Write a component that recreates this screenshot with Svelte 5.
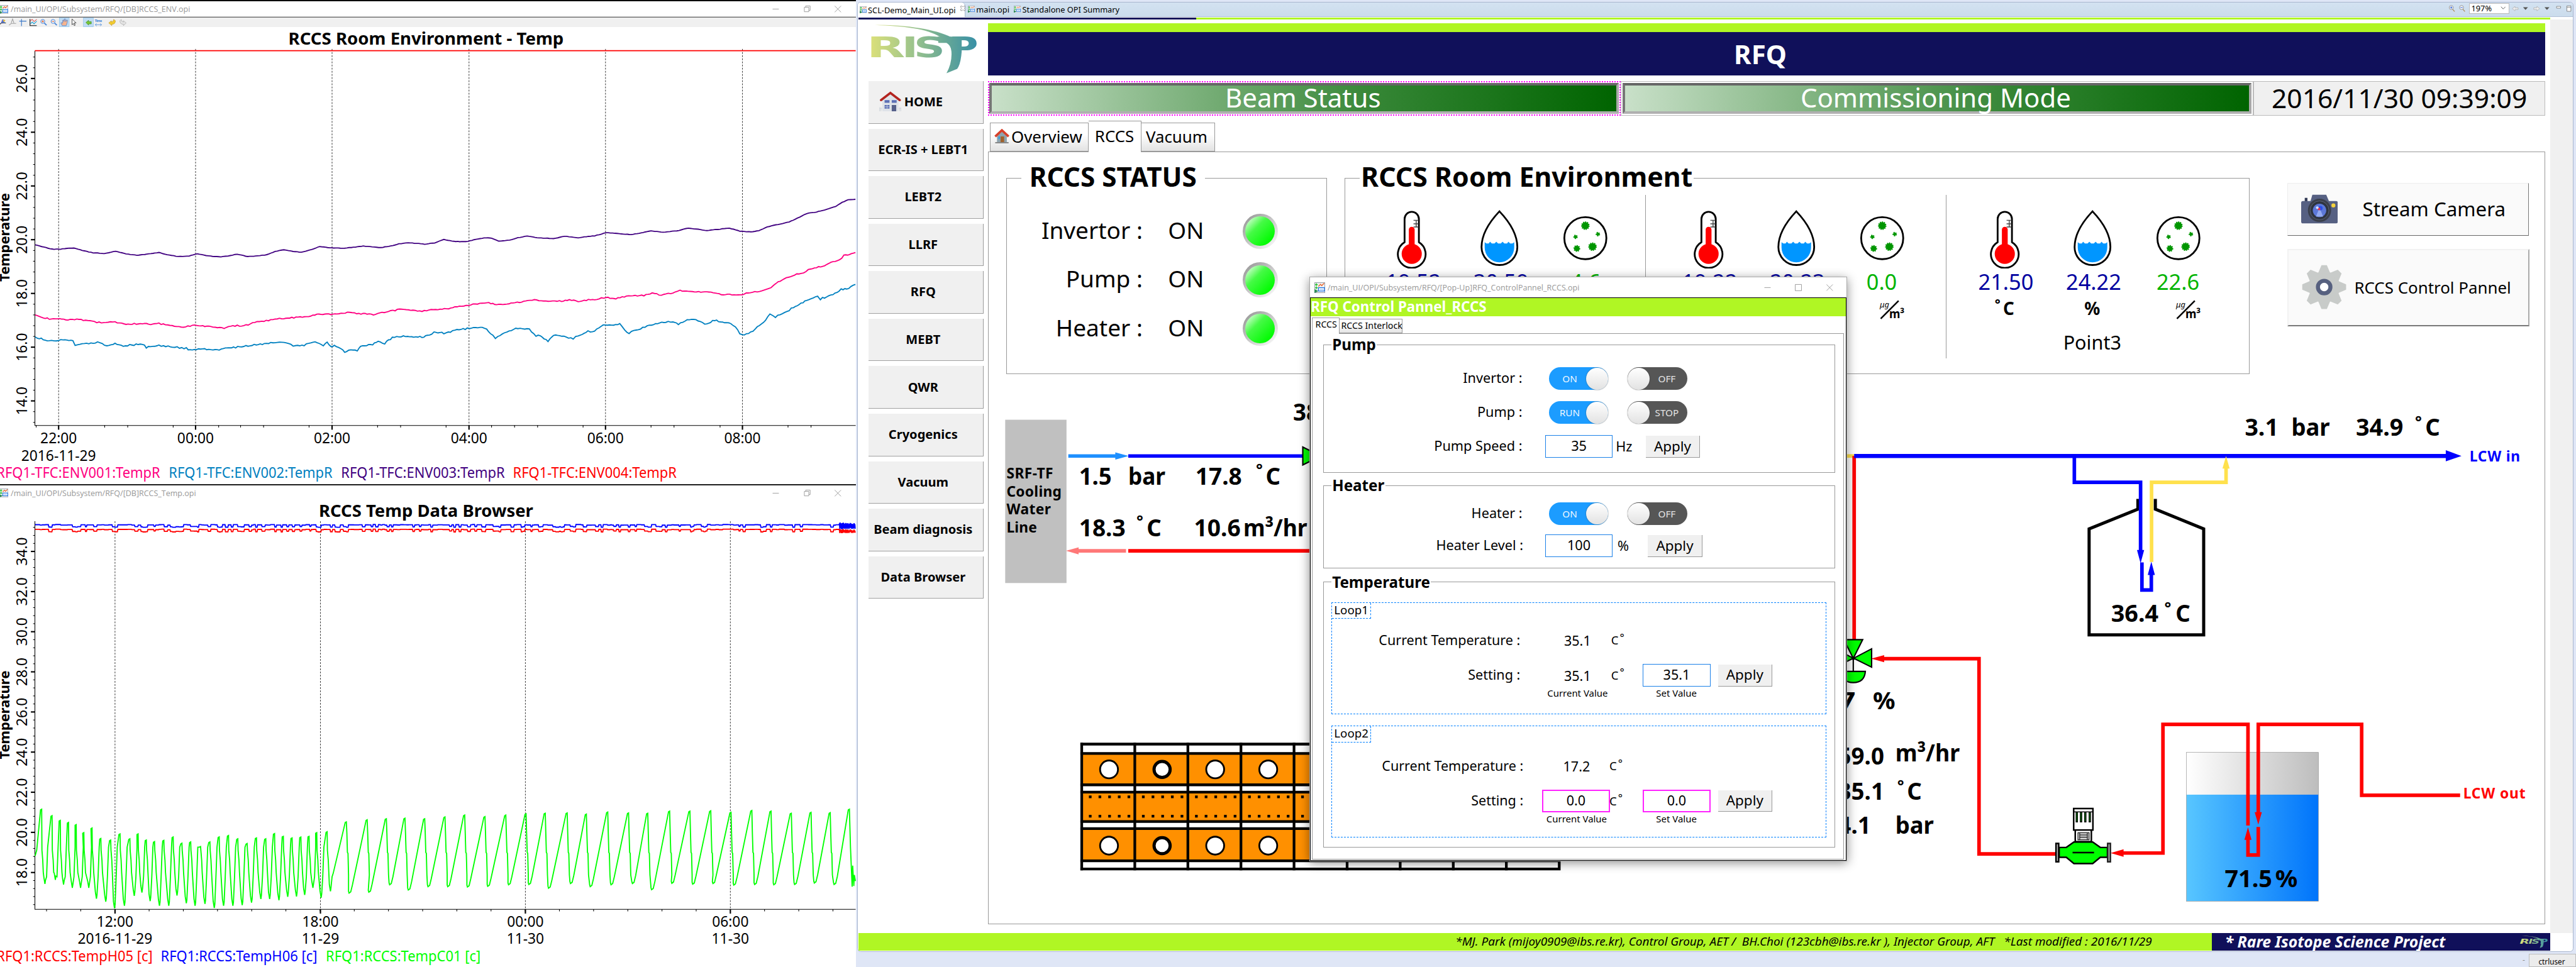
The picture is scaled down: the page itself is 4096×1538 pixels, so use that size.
<script>
  // Deterministic noise so that the traces look the same on every load
  function noise(seed) {
    let s = seed;
    return () => {
      s = (s * 1103515245 + 12345) % 2147483648;
      return s / 2147483648;
    };
  }

  const pts = (list) => list.map(([x, y]) => x.toFixed(1) + ',' + y.toFixed(1)).join(' ');

  // Room environment traces: sparse samples, densified with a little jitter
  const EX = 1.2245, EY = 0.692;
  function trace(flat, jitter, seed) {
    const r = noise(seed);
    const out = [];
    for (let i = 0; i + 3 < flat.length; i += 2) {
      const [x1, y1, x2, y2] = flat.slice(i, i + 4);
      const n = Math.max(1, Math.round((x2 - x1) / 4));
      for (let k = 0; k < n; k++) {
        const u = k / n;
        out.push([(x1 + (x2 - x1) * u) * EX, (y1 + (y2 - y1) * u + (r() - 0.5) * jitter) * EY]);
      }
    }
    out.push([flat[flat.length - 2] * EX, flat[flat.length - 1] * EY]);
    return pts(out);
  }

  const env003 = trace([64,793,80,800,95,807,110,807,135,803,150,811,170,819,190,821,211,814,230,822,250,827,268,823,290,818,305,825,325,831,345,829,360,822,380,829,403,832,420,828,433,823,452,831,470,829,487,825,502,814,518,809,535,814,550,817,565,810,583,799,605,803,625,804,645,801,663,797,695,802,713,797,728,790,745,786,775,791,793,787,810,776,828,782,850,783,865,777,887,770,897,772,910,781,930,778,945,770,962,765,980,770,1010,773,1030,765,1055,770,1085,764,1106,754,1130,757,1152,760,1170,755,1188,748,1210,752,1235,748,1256,739,1270,742,1290,747,1310,743,1331,739,1350,749,1370,751,1385,747,1400,735,1420,727,1440,719,1455,707,1472,692,1490,687,1508,679,1525,669,1537,656,1548,647,1561,646], 1.2, 7);
  const env001 = trace([64,1018,75,1027,90,1032,105,1031,120,1035,140,1033,160,1038,185,1045,210,1042,230,1049,260,1047,275,1050,290,1047,310,1054,335,1058,355,1054,385,1058,409,1062,425,1054,445,1055,465,1043,490,1037,510,1031,540,1028,567,1023,582,1015,600,1018,630,1012,655,1015,685,1018,705,1009,733,1001,770,1007,795,1002,815,1000,830,994,855,987,892,981,910,987,940,980,975,971,1000,975,1025,975,1035,971,1055,975,1085,969,1106,963,1120,968,1143,959,1175,957,1190,950,1207,955,1228,949,1241,940,1260,945,1290,946,1320,954,1355,955,1365,948,1390,942,1407,930,1420,914,1435,899,1450,889,1462,887,1475,873,1490,866,1505,860,1520,848,1532,841,1540,828,1550,825,1561,818], 4, 21);
  const env002 = trace([64,1088,68,1093,90,1103,115,1100,133,1102,137,1119,150,1113,178,1109,195,1118,210,1112,225,1119,260,1113,267,1124,290,1118,315,1123,340,1127,347,1134,362,1129,400,1131,430,1124,460,1117,490,1112,510,1106,535,1118,555,1117,575,1107,590,1117,597,1109,604,1122,610,1118,622,1128,629,1139,640,1132,652,1134,658,1119,680,1114,690,1105,702,1111,716,1092,740,1088,770,1091,780,1087,792,1076,810,1078,830,1070,868,1059,888,1063,895,1080,904,1094,925,1074,945,1062,966,1066,978,1086,986,1087,1000,1104,1010,1086,1025,1089,1046,1096,1055,1086,1073,1072,1085,1073,1097,1055,1131,1048,1140,1069,1148,1078,1165,1065,1185,1053,1215,1042,1228,1040,1238,1050,1250,1038,1270,1035,1286,1049,1304,1037,1322,1044,1334,1048,1342,1058,1350,1080,1358,1082,1370,1076,1382,1057,1397,1036,1405,1019,1415,1026,1432,1013,1448,995,1462,981,1472,972,1492,961,1497,968,1520,953,1535,937,1545,936,1561,921], 5, 33);

  const envMajor = [131, 437, 742, 1048, 1353, 1659];
  const envMinor = [66,191,233,316,399,439,481,564,689,731,814,897,939,981,1064,1188,1230,1314,1438,1480].map((c) => c * EX);
  const envTimes = ['22:00', '00:00', '02:00', '04:00', '06:00', '08:00'];
  const envTicks = [26, 24, 22, 20, 18, 16, 14].map((v) => ({ v: v.toFixed(1), y: 177 + (26 - v) * 60.05 }));
  const envSub = Array.from({ length: 36 }, (_, i) => 129 + i * 24.02).filter((y) => y < 950);

  // Loop temperatures
  const TX = 1.2245;
  const ty = (c) => 1080 + c * 0.6894;
  const peakX = [75,94,109,124,138,152,167,183,201,218,236,251,266,281,298,315,331,347,365,382,399,416,433,450,467,484,500,516,532,548,563,577,596,631,669,704,738,774,811,847,884,922,959,994,1034,1069,1108,1146,1181,1221,1258,1296,1333,1371,1406,1443,1479,1514,1549];
  const peakY = [1057,1078,1093,1100,1107,1133,1118,1152,1157,1137,1153,1137,1157,1162,1158,1147,1167,1163,1178,1163,1147,1142,1153,1168,1150,1153,1136,1145,1150,1147,1145,1133,1130,1098,1091,1088,1086,1088,1082,1076,1081,1076,1072,1070,1069,1073,1066,1069,1070,1063,1063,1062,1067,1061,1063,1070,1067,1068,1057];
  const lowX = [82,101,116,132,147,162,176,193,209,227,245,259,274,291,308,323,340,356,374,391,408,425,442,459,476,492,509,525,541,556,571,586,603,637,673,711,745,781,817,853,890,928,965,1001,1041,1077,1115,1154,1189,1226,1264,1301,1339,1377,1412,1450,1486,1522,1556];
  const lowY = [1299,1286,1301,1312,1312,1312,1347,1357,1378,1370,1338,1327,1355,1370,1370,1337,1362,1370,1364,1377,1370,1370,1368,1360,1348,1348,1352,1341,1340,1335,1312,1344,1323,1329,1326,1302,1319,1308,1308,1309,1307,1302,1301,1313,1298,1308,1302,1298,1318,1297,1300,1298,1303,1301,1302,1301,1296,1301,1308];
  const coolant = (() => {
    const out = [[64, 1208], [67, 1190]];
    peakX.forEach((px, i) => {
      const late = i > 32;
      out.push([px - 1, peakY[i] + 2], [px + 1, peakY[i]]);
      if (i === peakX.length - 1) return;
      const lx = lowX[i];
      const ly = lowY[i];
      if (late) {
        out.push([px + 2, 1135], [px + 3, 1197], [px + 4, 1200], [px + 5, 1270], [lx - 1, ly - 6], [lx, ly], [lx + 3, ly - 4], [lx + 6, ly - 26]);
      } else {
        out.push([px + 1.5, 1190], [px + 3, 1222], [px + 4, 1262], [lx - 2, ly - 22], [lx, ly], [lx + 1, ly - 12], [lx + 3, 1276], [lx + 5, i === 32 ? 1265 : 1180]);
      }
    });
    out.push([1552, 1180], [1555, 1308], [1556, 1240], [1558, 1306], [1559, 1270], [1561, 1290]);
    return pts(out.map(([x, y]) => [x * TX, ty(y)]));
  })();

  function steady(top, dip, spikeTop, spikeLow, seed) {
    const r = noise(seed);
    const out = [];
    let x = 64;
    while (x < 1526) {
      const low = r() > 0.62;
      const y = low ? dip - r() * 3 : top + r() * 2;
      out.push([x, y]);
      x += low ? 1.5 + r() * 4 : 2 + r() * 7;
      out.push([x, y]);
      x += 1;
    }
    while (x < 1561) {
      out.push([x, spikeTop + r() * 5], [x + 0.6, spikeLow - r() * 4]);
      x += 1.4;
    }
    return pts(out.map(([a, b]) => [a * TX, ty(b)]));
  }
  const tempH06 = steady(134, 143, 128, 149, 5);
  const tempH05 = steady(149, 158, 149, 162, 5);
  const loopMajor = [257, 716, 1174, 1632];
  const loopMinor = Array.from({ length: 24 }, (_, i) => 104 + i * 76.4).filter((x) => x < 1900);
  const loopTimes = [['12:00', '2016-11-29'], ['18:00', '11-29'], ['00:00', '11-30'], ['06:00', '11-30']];
  const loopTicks = [34, 32, 30, 28, 26, 24, 22, 20, 18].map((v) => ({ v: v.toFixed(1), y: 1232.5 + (34 - v) * 44.85 }));
  const loopSub = Array.from({ length: 48 }, (_, i) => 1178.7 + i * 17.94).filter((y) => y < 2030);

  const nav = ['HOME', 'ECR-IS + LEBT1', 'LEBT2', 'LLRF', 'RFQ', 'MEBT', 'QWR', 'Cryogenics', 'Vacuum', 'Beam diagnosis', 'Data Browser'];
  const status = ['Invertor :', 'Pump :', 'Heater :'];
  const points = [
    { name: 'Point1', t: '19.52', h: '30.59', d: '4.6' },
    { name: 'Point2', t: '19.22', h: '20.23', d: '0.0' },
    { name: 'Point3', t: '21.50', h: '24.22', d: '22.6' }
  ];

  // Readings on the process diagram: x, baseline, text, width
  const readings = [
    [2410, 1084, '1.5', 73], [2520, 1084, 'bar', 83], [2670, 1084, '17.8', 104], [2827, 1084, 'C', 33],
    [2410, 1199, '18.3', 104], [2561, 1199, 'C', 33], [2667, 1199, '10.6', 104], [2777, 1199, 'm³/hr', 143],
    [2888, 940, '38.1', 103],
    [5015, 974, '3.1', 75], [5119, 974, 'bar', 86], [5263, 974, '34.9', 106], [5418, 974, 'C', 33],
    [4716, 1390, '36.4', 106], [4860, 1390, 'C', 33],
    [4070, 1585, '47', 75], [4184, 1585, '%', 50],
    [4106, 1709, '59.0', 103], [4234, 1701, 'm³/hr', 144],
    [4106, 1788, '35.1', 103], [4260, 1788, 'C', 33],
    [4106, 1863, '4.1', 73], [4234, 1863, 'bar', 86],
    [4970, 1983, '71.5', 106], [5083, 1983, '%', 50]
  ];
  const rings = [[2813, 1042], [2546, 1158], [5403, 936], [4843, 1352], [4246, 1749]];

  const cols = Array.from({ length: 9 }, (_, i) => 2416 + i * 118.6);
</script>

{#snippet opi(size)}
  <svg width={size} height={size} viewBox="0 0 16 16">
    <rect x="0.5" y="0.5" width="15" height="15" fill="#f4f4f4" stroke="#9aa0ac" />
    <path d="M3 1.5v4M1 3.5h4M3 6v4M1 8h4" stroke="#22c02c" stroke-width="1.2" />
    <path d="M6 6l3-3 2 2 3.5-3.5" stroke="#e8622a" stroke-width="1.3" fill="none" />
    <rect x="6" y="8" width="9" height="5" fill="#fff" stroke="#1a6fe0" stroke-width="1.2" />
    <path d="M8 10.5h5" stroke="#1a6fe0" stroke-dasharray="1 1" />
    <path d="M0 10l6 3-6 3z" fill="#2e8b57" />
  </svg>
{/snippet}

{#snippet controls(mid)}
  <svg class="controls" width="160" height="18" viewBox="0 0 160 18">
    <g stroke="#999" stroke-width="1.3" fill="none">
      <path d="M2 9h14" />
      {#if mid === 'restore'}
        <path d="M73 5h10v10h-10zM76 5v-3h10v10h-3" />
      {:else}
        <path d="M71 2h14v14h-14z" />
      {/if}
      <path d="M141 2l14 14M155 2l-14 14" />
    </g>
  </svg>
{/snippet}

{#snippet logo(w, h)}
  <svg class="logo" width={w} height={h} viewBox="0 0 238 110">
    <defs>
      <linearGradient id="risp" x1="0" x2="238" y1="0" y2="0" gradientUnits="userSpaceOnUse">
        <stop offset="0" stop-color="#dbe07a" />
        <stop offset="0.4" stop-color="#9cc48c" />
        <stop offset="0.7" stop-color="#68a896" />
        <stop offset="1" stop-color="#3890a6" />
      </linearGradient>
    </defs>
    <g fill="url(#risp)">
      <path d="M10 1C75 0 145 10 180 28L158 29C125 8 75 4 10 1z" />
      <path d="M150 27H204V60Q202 88 194 99L170 109Q183 85 181 60Q180 46 170 41H152z" />
      <text class="mark" x="-8" y="73" textLength="86" lengthAdjust="spacingAndGlyphs">R</text>
      <text class="mark" x="70" y="73" textLength="37" lengthAdjust="spacingAndGlyphs">I</text>
      <text class="mark" x="97" y="73" textLength="70" lengthAdjust="spacingAndGlyphs">S</text>
      <text class="mark" x="175" y="73" textLength="66" lengthAdjust="spacingAndGlyphs">P</text>
    </g>
  </svg>
{/snippet}

{#snippet house(w, h)}
  <svg width={w} height={h} viewBox="0 0 48 46">
    <path d="M6 20L24 5l18 15v25H6z" fill="#dfe3e8" />
    <path d="M0 36v9M3 36v9M45 36v9M48 36v9M0 39h5M43 39h5" stroke="#cfd5db" stroke-width="1.5" />
    <path d="M3 20L24 4l21 16" fill="none" stroke="#b3241f" stroke-width="5" stroke-linecap="round" />
    <path d="M11 20h11v6H11zM27 20h11v6H27zM11 31h11v8H11z" fill="#5b6fb5" />
    <path d="M27 31h10v14H27z" fill="#56608a" />
    <path d="M16.5 31v8M11 35h11" stroke="#dfe3e8" />
  </svg>
{/snippet}

{#snippet toggle(label, on)}
  <span class="toggle" class:on><i></i><b>{label}</b></span>
{/snippet}

<div class="screen">
  <section class="charts">
    <div class="win first">
      <div class="titlebar">
        {@render opi(20)}<span>/main_UI/OPI/Subsystem/RFQ/[DB]RCCS_ENV.opi</span>
        {@render controls('restore')}
      </div>
      <div class="toolbar">
        <svg width="300" height="22" viewBox="0 40 300 22">
          <rect x="132.500" y="40.500" width="22" height="20" fill="#c0dcf3" stroke="#90c4ee" />
          <rect x="186.500" y="40.500" width="22" height="20" fill="#c0dcf3" stroke="#90c4ee" />
          <path d="M-2 56l5-4h10" stroke="#222" fill="none" stroke-width="1.500" />
          <text x="2" y="52" font-size="12" font-weight="700" fill="#1a50d0">A</text>
          <path d="M9 44l3 3-3 3-3-3z" fill="#e8b83a" />
          <path d="M20 57l5-4h11M25 52l3-9 3 9" stroke="#a0a0a0" fill="none" stroke-width="1.500" />
          <path d="M43 48h16M48 43v16" stroke="#3b78c8" stroke-width="1.600" />
          <path d="M67 43v15h15" stroke="#111" fill="none" stroke-width="1.600" />
          <path d="M68 47l4-3 4 5 6-5" stroke="#d02020" fill="none" stroke-width="1.300" />
          <path d="M68 54l4-4 4 4 6-6" stroke="#18a0d8" fill="none" stroke-width="1.500" />
          <g fill="#eef5ff" stroke="#4a86d8" stroke-width="1.400">
            <path d="M99 52l5 5M122 52l5 5" stroke-width="2.600" />
            <circle cx="95.500" cy="48.500" r="4.500" /><circle cx="118.500" cy="48.500" r="4.500" />
          </g>
          <path d="M93 48.500h5M95.500 46v5M116 48.500h5" stroke="#e05010" stroke-width="1.400" />
          <path d="M139 58l-3-6 2-1 2 2v-7l2-1 1 4 1-6 2 0 1 6 2-4 2 1-1 6-2 6z" fill="#f8b48c" stroke="#3a78d0" />
          <path d="M161 43v13l3-3 2 5 2-1-2-5h4z" fill="#fff" stroke="#111" />
          <path d="M192 51l6-5v3h6v5h-6v3z" fill="#7cc832" stroke="#3b8a2a" />
          <text x="212" y="50" font-size="7.500" font-weight="700" fill="#3a82d8" textLength="16">Time</text>
          <path d="M213 56h14M216 53l-3 3 3 3M224 53l3 3-3 3" stroke="#3a82d8" fill="none" />
          <path d="M243 52l6-5v3q5-1 5-6l4 3q0 8-8 8v3z" fill="#f2cc30" stroke="#b88a18" stroke-width="0.800" />
          <path d="M282 52l-6-5v3q-5-1-5-6l-3 3q0 8 8 8v3z" fill="#e4e4e4" stroke="#999" stroke-width="0.800" />
        </svg>
      </div>
      <svg class="plot" width="1912" height="1020" viewBox="0 62 1912 1020">
        <text class="title" x="952" y="101" text-anchor="middle" textLength="615" lengthAdjust="spacingAndGlyphs">RCCS Room Environment - Temp</text>
        {#each envMajor as x, i}
          <line x1={x} x2={x} y1="111" y2="952" class="grid" />
          <line x1={x} x2={x} y1="952" y2="962" class="major" />
          <text x={x} y="993" text-anchor="middle">{envTimes[i]}</text>
        {/each}
        {#each envMinor as x}<line x1={x} x2={x} y1="952" y2="957" class="minor" />{/each}
        {#each envSub as y}<line x1="74" x2="78" y1={y} y2={y} class="minor" />{/each}
        {#each envTicks as t}
          <line x1="69" x2="78" y1={t.y} y2={t.y} class="major" />
          <text transform="translate(60 {t.y}) rotate(-90)" text-anchor="middle">{t.v}</text>
        {/each}
        <path d="M78 115V952.500H1912" class="axis" />
        <text class="ytitle" transform="translate(21 532) rotate(-90)" text-anchor="middle" textLength="198">Temperature</text>
        <line x1="78" x2="1912" y1="115" y2="115" stroke="#f00" stroke-width="2.500" />
        <polyline class="line" points={env003} stroke="#400080" />
        <polyline class="line" points={env001} stroke="#ff0080" />
        <polyline class="line" points={env002} stroke="#0080c0" />
        <text x="131" y="1031" text-anchor="middle">2016-11-29</text>
        <text x="-8" y="1069" fill="#ff0080" textLength="366" lengthAdjust="spacingAndGlyphs">RFQ1-TFC:ENV001:TempR</text>
        <text x="377" y="1069" fill="#0080c0" textLength="366" lengthAdjust="spacingAndGlyphs">RFQ1-TFC:ENV002:TempR</text>
        <text x="762" y="1069" fill="#400080" textLength="366" lengthAdjust="spacingAndGlyphs">RFQ1-TFC:ENV003:TempR</text>
        <text x="1146" y="1069" fill="#ff0000" textLength="366" lengthAdjust="spacingAndGlyphs">RFQ1-TFC:ENV004:TempR</text>
      </svg>
    </div>
    <div class="win second">
      <div class="titlebar">
        {@render opi(20)}<span>/main_UI/OPI/Subsystem/RFQ/[DB]RCCS_Temp.opi</span>
        {@render controls('restore')}
      </div>
      <svg class="plot" width="1912" height="1041" viewBox="0 1120 1912 1041">
        <text class="title" x="952" y="1155" text-anchor="middle" textLength="479" lengthAdjust="spacingAndGlyphs">RCCS Temp Data Browser</text>
        {#each loopMajor as x, i}
          <line x1={x} x2={x} y1="1165" y2="2032" class="grid" />
          <line x1={x} x2={x} y1="2032" y2="2042" class="major" />
          <text x={x} y="2072" text-anchor="middle">{loopTimes[i][0]}</text>
          <text x={x} y="2110" text-anchor="middle">{loopTimes[i][1]}</text>
        {/each}
        {#each loopMinor as x}<line x1={x} x2={x} y1="2032" y2="2037" class="minor" />{/each}
        {#each loopSub as y}<line x1="74" x2="78" y1={y} y2={y} class="minor" />{/each}
        {#each loopTicks as t}
          <line x1="69" x2="78" y1={t.y} y2={t.y} class="major" />
          <text transform="translate(60 {t.y}) rotate(-90)" text-anchor="middle">{t.v}</text>
        {/each}
        <path d="M78 1165V2032.500H1912" class="axis" />
        <text class="ytitle" transform="translate(21 1598) rotate(-90)" text-anchor="middle" textLength="198">Temperature</text>
        <polyline class="line" points={tempH06} stroke="#0000ff" />
        <polyline class="line" points={tempH05} stroke="#ff0000" />
        <polyline class="line" points={coolant} stroke="#00ff00" />
        <text x="-8" y="2148" fill="#ff0000" textLength="349" lengthAdjust="spacingAndGlyphs">RFQ1:RCCS:TempH05 [c]</text>
        <text x="359" y="2148" fill="#0000ff" textLength="350" lengthAdjust="spacingAndGlyphs">RFQ1:RCCS:TempH06 [c]</text>
        <text x="728" y="2148" fill="#00ff00" textLength="346" lengthAdjust="spacingAndGlyphs">RFQ1:RCCS:TempC01 [c]</text>
      </svg>
    </div>
  </section>

  <main class="main">
    <div class="frame">
      <div class="tabstrip">
        <div class="doc active">{@render opi(16)}<span>SCL-Demo_Main_UI.opi</span><svg width="12" height="12" viewBox="0 0 12 12"><path d="M1 1h3l2 2 2-2h3v3L9 6l2 2v3H8L6 9l-2 2H1V8l2-2-2-2z" fill="none" stroke="#777" /></svg></div>
        <div class="doc">{@render opi(16)}<span>main.opi</span></div>
        <div class="doc">{@render opi(16)}<span>Standalone OPI Summary</span></div>
        <div class="tools">
          <svg width="40" height="18" viewBox="0 0 40 18">
            <g fill="#fff" stroke="#8a8a8a" stroke-width="1.300">
              <path d="M9 10l5 6M32 10l5 6" stroke="#b09060" stroke-width="2" />
              <circle cx="6.500" cy="7" r="4.500" /><circle cx="29.500" cy="7" r="4.500" />
            </g>
            <path d="M4 7h5M6.500 4.500v5M27 7h5" stroke="#2a5ad0" stroke-width="1.400" />
          </svg>
          <span class="zoom">197%<svg width="12" height="8" viewBox="0 0 12 8"><path d="M1 1l5 5 5-5" fill="none" stroke="#555" stroke-width="1.300" /></svg></span>
          <svg width="136" height="16" viewBox="0 0 136 16">
            <g fill="#eee" stroke="#aaa"><path d="M1 8l6-5v3h7v4H7v3zM62 8l-6-5v3h-7v4h7v3z" /></g>
            <path d="M25 5h11l-5.500 6zM73 5h11l-5.500 6z" fill="#555" />
            <path d="M100 3h9v4h-9zM123 2h9v12h-9zM123 5h9" fill="#fff" stroke="#666" />
          </svg>
        </div>
      </div>
      <div class="accent"></div>

      <div class="body">
        <aside class="side">
          <div class="brand">{@render logo(238, 110)}</div>
          {#each nav as item, i}
            <button class="nav" class:home={i === 0}>{#if i === 0}{@render house(50, 46)}{/if}{item}</button>
          {/each}
        </aside>

        <div class="content">
          <header class="banner">RFQ</header>
          <div class="modes">
            <div class="mode alarm"><div>Beam Status</div></div>
            <div class="mode"><div>Commissioning Mode</div></div>
            <div class="clock">2016/11/30 09:39:09</div>
          </div>
          <div class="tabs">
            <div class="tab">
              <svg width="34" height="34" viewBox="0 0 34 34">
                <path d="M6 15L17 5l11 10v15H6z" fill="#8fa3ad" />
                <path d="M2 17L17 3l15 14" fill="none" stroke="#d8402a" stroke-width="5" />
                <path d="M14 17h8v13h-8z" fill="#a0622c" /><path d="M9 17h4v6H9z" fill="#3aa0e0" />
                <path d="M2 31h30" stroke="#888" stroke-width="3" />
              </svg>
              Overview
            </div>
            <div class="tab current">RCCS</div>
            <div class="tab">Vacuum</div>
          </div>
          <div class="panel">
            <div class="top">
              <fieldset class="group status">
                <legend>RCCS STATUS</legend>
                {#each status as s}
                  <div class="row"><span>{s}</span><b>ON</b><i class="led"></i></div>
                {/each}
              </fieldset>

              <fieldset class="group env">
                <legend>RCCS Room Environment</legend>
                <div class="points">
                  {#each points as p}
                    <div class="point">
                      <svg width="588" height="132" viewBox="-98 0 588 132">
                        <path d="M-16 72V20a16 16 0 0 1 32 0V72A31 31 0 1 1 -16 72z" fill="#fff" stroke="#000" stroke-width="4" />
                        <path d="M4 23h11M4 31h11M4 38h11M10 23v15" stroke="#444" stroke-width="2" />
                        <path d="M0 98V44" stroke="#f00" stroke-width="13" stroke-linecap="round" />
                        <circle cx="0" cy="98" r="22.500" fill="#f00" />
                        <path d="M196 3C178 22 156 50 156 83a40 40 0 0 0 80 0C236 50 214 22 196 3z" fill="#fff" stroke="#000" stroke-width="4" />
                        <path d="M163 72l4 3 5 0 3-4 4 4h6l4-4 4 4h6l4-4 4 4h6l3-4 4 4h5l4-3v12a33 33 0 0 1-66 0z" fill="#0096ff" />
                        <circle cx="388" cy="63" r="47" fill="#fff" stroke="#000" stroke-width="4" />
                        <g fill="#009600" stroke="#009600" stroke-width="3" stroke-dasharray="2.500 2">
                          <circle cx="388" cy="35" r="8" /><circle cx="416" cy="54" r="3.500" />
                          <circle cx="366" cy="60" r="3.500" /><circle cx="369" cy="86" r="6" /><circle cx="404" cy="82" r="8" />
                        </g>
                      </svg>
                      <div class="vals"><span>{p.t}</span><span>{p.h}</span><span class="dust">{p.d}</span></div>
                      <div class="units">
                        <span><sup>°</sup>C</span><span>%</span>
                        <span><svg class="frac" width="56" height="44" viewBox="0 0 56 44"><text x="0" y="17" font-size="18" font-style="italic" font-weight="400">μg</text><path d="M2 42L42 2" stroke="#000" stroke-width="3.500" /><text x="21" y="41" font-size="27" font-weight="700" textLength="34" lengthAdjust="spacingAndGlyphs">m³</text></svg></span>
                      </div>
                      <div class="pname">{p.name}</div>
                    </div>
                  {/each}
                </div>
              </fieldset>

              <div class="actions">
                <button class="camera">
                  <svg width="82" height="66" viewBox="0 0 82 66">
                    <path d="M8 8h6v10H8z" fill="#333b55" />
                    <path d="M25 1h31l6 14h16a4 4 0 0 1 4 4v42a4 4 0 0 1-4 4H4a4 4 0 0 1-4-4V19a4 4 0 0 1 4-4h17z" fill="#566082" />
                    <circle cx="41" cy="36" r="26" fill="#3a3f4c" /><circle cx="41" cy="36" r="21" fill="#2e3440" stroke="#6c7488" />
                    <circle cx="41" cy="36" r="15" fill="#5c78d8" /><path d="M41 30l8 20H33z" fill="#93aaf0" />
                    <circle cx="43" cy="31" r="5" fill="#2a50e8" /><circle cx="40" cy="33" r="3" fill="#e83050" /><circle cx="36" cy="30" r="3" fill="#d8e4ff" />
                    <circle cx="72" cy="25" r="4.500" fill="#f5d33c" />
                  </svg>
                  <span>Stream Camera</span>
                </button>
                <button class="control">
                  <svg width="100" height="100" viewBox="-50 -50 100 100">
                    <circle r="35" fill="#c8cbc9" />
                    {#each [0, 45, 90, 135, 180, 225, 270, 315] as a}
                      <path d="M-14 -30L-6 -49H6L14 -30z" transform="rotate({a})" fill="#c8cbc9" />
                    {/each}
                    <circle r="14" fill="#fff" stroke="#56607f" stroke-width="9" />
                  </svg>
                  <span>RCCS Control Pannel</span>
                </button>
              </div>
            </div>

            <svg class="diagram" width="3478" height="1228" viewBox="2208 836 3478 1228">
              <defs>
                <linearGradient id="air"><stop offset="0" stop-color="#fff" /><stop offset="1" stop-color="#bdbdbd" /></linearGradient>
                <linearGradient id="water"><stop offset="0" stop-color="#58c6ff" /><stop offset="1" stop-color="#0074fb" /></linearGradient>
              </defs>
              <rect x="2245" y="938" width="137" height="365" fill="#c0c0c0" />
              <g class="cool">
                <text x="2248" y="1069" textLength="104">SRF-TF</text><text x="2248" y="1110" textLength="123">Cooling</text>
                <text x="2248" y="1150" textLength="99">Water</text><text x="2248" y="1190" textLength="68">Line</text>
              </g>

              <g fill="none" stroke-width="8">
                <path d="M2386 1019H2492" stroke="#1e90ff" />
                <path d="M2520 1019H2912" stroke="#00f" />
                <path d="M2515 1231H2406" stroke="#ff7878" />
                <path d="M2520 1231H2940" stroke="#f00" />
                <path d="M4100 1019H4142" stroke="#ffe14d" />
                <path d="M4142 1429V1019" stroke="#f00" />
                <path d="M4142 1019H5466" stroke="#00f" stroke-width="9" />
              </g>
              <path d="M2491 1011l30 8-30 8z" fill="#1e90ff" />
              <path d="M2409 1223l-28 8 28 8z" fill="#ff7878" />
              <path d="M5464 1006l35 13-35 12z" fill="#00f" />
              <path d="M2910 999v40l40-20z" fill="#0f0" stroke="#000" stroke-width="3" />

              <rect x="2416" y="1663" width="1068" height="279" fill="#fff" />
              <path d="M2416 1684H3484V1754H2416zM2416 1770H3484V1836H2416zM2416 1852H3484V1924H2416z" fill="#ff9000" />
              {#each cols as x, i}
                <line x1={x} x2={x} y1="1660" y2="1945" stroke="#000" stroke-width="6" />
                {#each [1719.5, 1890] as cy}
                  <circle cx={x + 61} cy={cy} r={i % 9 === 1 ? 18 : 20} fill="#fff" stroke="#000" stroke-width={i % 9 === 1 ? 7 : 4} />
                {/each}
                {#each [0, 1, 2, 3, 4] as k}
                  <path d="M{x + 16 + k * 21.6} 1778h6v6h-6zM{x + 16 + k * 21.6} 1821h6v6h-6z" />
                {/each}
              {/each}
              <path d="M3483 1660V1945M2413 1663H3486M2413 1684H3486M2413 1754H3486M2413 1770.500H3486M2413 1836H3486M2413 1852H3486M2413 1924H3486M2413 1942H3486" stroke="#000" stroke-width="6" fill="none" />

              <path d="M4776 1115V1138L4667 1182V1419H4923V1182L4815 1138V1115" fill="#fff" stroke="#000" stroke-width="7" />
              <g fill="none" stroke-width="8">
                <path d="M4634 1019V1078H4782V1232" stroke="#00f" />
                <path d="M4785 1257V1318.500H4806V1284" stroke="#00f" />
                <path d="M4806.500 1256V1078H4973V1045" stroke="#ffe14d" />
              </g>
              <path d="M4774 1229h16l-8 30zM4798 1285h16l-8-30z" fill="#00f" />
              <path d="M4965 1047h16l-8-28z" fill="#ffe14d" />

              <rect x="4884.500" y="1681.500" width="295" height="95" fill="url(#air)" />
              <rect x="4884.500" y="1776" width="295" height="238" fill="url(#water)" />
              <rect x="4884.500" y="1681.500" width="295" height="333" fill="none" stroke="#999" />
              <g fill="none" stroke="#f00" stroke-width="8">
                <path d="M5496 1777.500H5276V1619H5045V1816" />
                <path d="M5045 1848V1911H5022V1876" />
                <path d="M5022 1845V1619H4832V1906.500H4742" />
                <path d="M4592 1908.500H4421V1472H4206" />
              </g>
              <g fill="#f00">
                <path d="M5037 1815h16l-8 28zM5014 1877h16l-8-28zM4744 1898v17l-29-8.500zM4209 1464v16l-29-8z" />
              </g>

              <g stroke="#000" stroke-width="3">
                <path d="M4140 1472V1502" />
                <path d="M4119 1429.500h42l-21 42zM4181 1450v41l-40-20zM4100 1450v41l40-20z" fill="#0f0" />
                <path d="M4113 1500.500h54q-2 25-27 25t-27-25z" fill="#0f0" />
              </g>
              <circle cx="4140" cy="1471" r="4" />

              <g stroke="#000" stroke-width="3.500" transform="translate(4560 1780)">
                <path d="M40 114h16l17-12h42l17 12h16v22h-16l-17 14H73l-17-14H40z" fill="#0f0" />
                <rect x="33" y="105" width="6" height="41" fill="#bbb" />
                <rect x="148.500" y="105" width="6" height="41" fill="#bbb" stroke="#222" />
                <rect x="76" y="74" width="36" height="27" fill="#fff" />
                <rect x="82" y="81" width="25" height="16" fill="#ccc" stroke-width="1.500" />
                <path d="M86 81v16M103 81v16M86 86h17M86 91h17" stroke-width="1.500" />
                <rect x="72.500" y="27" width="43" height="48" fill="#fff" />
                <path d="M73 34.500h42" stroke-width="2" />
                <path d="M78 35h3v22h-3zM87.500 35h3v22h-3zM97 35h3v22h-3zM107 35h3v22h-3z" fill="#0b0" stroke-width="2" />
                <path d="M70 125.500h48" />
              </g>

              <g class="reading">
                {#each readings as [x, y, s, w]}
                  <text {x} {y} textLength={w} lengthAdjust="spacingAndGlyphs">{s}</text>
                {/each}
                {#each rings as [x, y]}<text class="deg" {x} y={y + 20} text-anchor="middle">°</text>{/each}
              </g>
              <text class="lcw" x="5517" y="1032" textLength="113" fill="#00f">LCW in</text>
              <text class="lcw" x="5503" y="1784" textLength="139" fill="#f00">LCW out</text>
            </svg>
          </div>
        </div>
      </div>

      <footer class="foot">
        <div class="credit">*MJ. Park (mijoy0909@ibs.re.kr), Control Group, AET /&nbsp; BH.Choi (123cbh@ibs.re.kr ), Injector Group, AFT &nbsp; *Last modified : 2016/11/29</div>
        <div class="project"><span>* Rare Isotope Science Project</span>{@render logo(60, 34)}</div>
      </footer>
    </div>
    <div class="statusbar"><span>-</span><b>ctrluser</b></div>
  </main>

  <div class="popup">
    <div class="titlebar">
      {@render opi(24)}<span>/main_UI/OPI/Subsystem/RFQ/[Pop-Up]RFQ_ControlPannel_RCCS.opi</span>
      {@render controls('max')}
    </div>
    <div class="inner">
      <h2>RFQ Control Pannel_RCCS</h2>
      <div class="ptabs"><span class="sel">RCCS</span><span>RCCS Interlock</span></div>
      <div class="pbody">
        <fieldset class="pgroup pump">
          <legend>Pump</legend>
          <div class="prow"><label>Invertor :</label>{@render toggle('ON', true)}{@render toggle('OFF', false)}</div>
          <div class="prow"><label>Pump :</label>{@render toggle('RUN', true)}{@render toggle('STOP', false)}</div>
          <div class="prow set"><label>Pump Speed :</label><span class="field">35</span><em>Hz</em><button>Apply</button></div>
        </fieldset>
        <fieldset class="pgroup heat">
          <legend>Heater</legend>
          <div class="prow"><label>Heater :</label>{@render toggle('ON', true)}{@render toggle('OFF', false)}</div>
          <div class="prow set wide"><label>Heater Level :</label><span class="field">100</span><em>%</em><button>Apply</button></div>
        </fieldset>
        <fieldset class="pgroup temp">
          <legend>Temperature</legend>
          <div class="loop">
            <span class="lname">Loop1</span>
            <div class="lrow"><label>Current Temperature :</label><span>35.1</span><em>C<sup>°</sup></em></div>
            <div class="lrow"><label>Setting :</label><span>35.1</span><em>C<sup>°</sup></em><span class="field">35.1</span><button>Apply</button></div>
            <div class="lrow sub"><i></i><span>Current Value</span><i></i><span>Set Value</span></div>
          </div>
          <div class="loop two">
            <span class="lname">Loop2</span>
            <div class="lrow"><label>Current Temperature :</label><span>17.2</span><em>C<sup>°</sup></em></div>
            <div class="lrow"><label>Setting :</label><span class="field bad">0.0</span><em>C<sup>°</sup></em><span class="field bad">0.0</span><button>Apply</button></div>
            <div class="lrow sub"><i></i><span>Current Value</span><i></i><span>Set Value</span></div>
          </div>
        </fieldset>
      </div>
    </div>
  </div>
</div>

<style>
  :global(body) { margin: 0; overflow: hidden; }
  .screen { position: relative; display: flex; width: 5756px; height: 2161px; zoom: 0.7116; overflow: hidden; background: #fff; font-family: "Noto Sans", "Open Sans", sans-serif; color: #000; }
  .screen :global(*) { box-sizing: border-box; }
  svg { flex: none; display: block; }
  i, em { font-style: normal; }
  button { font-family: inherit; color: inherit; margin: 0; padding: 0; border: 0; }
  fieldset { margin: 0; padding: 0; min-width: 0; border: 1px solid #999; }

  .charts { width: 1912px; flex: none; display: flex; flex-direction: column; overflow: hidden; }
  .win { display: flex; flex-direction: column; }
  .first { border-top: 4px solid #000; height: 1082px; }
  .second { border-top: 3px solid #1c1c1c; height: 1079px; }
  .win .titlebar { height: 36px; display: flex; align-items: center; margin-left: -2px; color: #989898; font-size: 17.6px; }
  .second .titlebar { height: 35px; }
  .win .titlebar span { margin-left: 6px; font-family: "Open Sans", sans-serif; white-space: nowrap; }
  .controls { margin-left: auto; }
  .win .controls { margin-right: 28px; }
  .toolbar { height: 22px; background: #f0f0f0; box-shadow: 0 -2px 0 #6a6a6a; }
  .first .titlebar { height: 36px; }
  .plot { overflow: hidden; }
  .plot text { font-size: 32px; }
  .toolbar text { font-family: "Noto Sans", sans-serif; }
  .plot .title { font-size: 38px; font-weight: 700; }
  .plot .ytitle { font-weight: 700; font-size: 31px; }
  .grid { stroke: #000; stroke-width: 1.1; stroke-dasharray: 4 3; }
  .major { stroke: #000; stroke-width: 3; }
  .minor { stroke: #000; stroke-width: 1.5; }
  .axis { stroke: #000; fill: none; stroke-width: 1.5; }
  .line { fill: none; stroke-width: 2.6; }

  .main { flex: 1; background: #dfe6f6; padding: 4px 6px 0 3px; display: flex; flex-direction: column; }
  .frame { height: 2124px; background: #fff; border: 1px solid #a9b6cf; border-radius: 8px; overflow: hidden; display: flex; flex-direction: column; }
  .tabstrip { height: 32px; background: linear-gradient(#d3e2f1, #cbdcec); border-bottom: 1px solid #b4c2d8; display: flex; font-size: 18px; white-space: nowrap; }
  .doc { display: flex; align-items: center; gap: 3px; padding-left: 4px; margin-right: 6px; }
  .doc.active { flex: none; background: #fff; width: 241px; border-radius: 0 8px 0 0; border-right: 1px solid #a9b6cf; height: 33px; margin-right: 1px; }
  .doc.active svg:last-child { margin-left: 7px; margin-bottom: 6px; }
  .tools { margin-left: auto; display: flex; align-items: center; gap: 6px; padding-bottom: 4px; }
  .zoom { display: flex; align-items: center; justify-content: space-between; width: 90px; height: 24px; padding: 0 6px 0 4px; background: #fff; border: 1px solid #bbb; font-size: 18px; }
  .accent { margin: 2px 0 0 2px; height: 4px; width: 3780px; background: linear-gradient(90deg, #10105a 755px, #b0f624 755px); }
  .body { position: relative; height: 2042px; display: flex; background: linear-gradient(90deg, #fff 3782px, #f0f0f0 3782px); }

  .side { width: 291px; flex: none; padding-left: 25px; }
  .brand { height: 138px; padding: 12px 0 0 4px; }
  .logo { overflow: visible; }
  .mark { font-family: "DejaVu Sans", sans-serif; font-weight: 700; font-size: 63px; }
  .nav { display: flex; align-items: center; justify-content: center; gap: 4px; width: 256px; height: 95px; margin-bottom: 11.2px; padding: 0 12px 2px 0; background: #f0f0f0; border-right: 1px solid #999; border-bottom: 2px solid #a0a0a0; font-size: 28.2px; font-weight: 700; white-space: nowrap; }
  .nav.home { justify-content: flex-start; gap: 6px; padding-left: 23px; }

  .content { width: 3480px; flex: none; padding-top: 9px; }
  .banner { height: 116px; border-top: 20px solid #b0f624; background: #10105a; color: #fff; font-size: 59px; font-weight: 700; line-height: 97px; text-align: center; padding-right: 28px; }
  .modes { display: flex; height: 77px; margin-top: 13px; gap: 0; }
  .mode { width: 1414px; border: 1px solid #bbb; padding: 3px; margin-right: 0; }
  .mode.alarm { border: 3px dashed #f0f; border-style: dotted; padding: 1px; }
  .mode > div { height: 100%; border: 6px solid; border-color: #666 #a8a8a8 #b0b0b0 #777; background: linear-gradient(90deg, #c9e0c9, #348534 62%, #006400); color: #fff; font-size: 59px; line-height: 53px; text-align: center; padding-right: 6px; }
  .clock { flex: 1; border: 1px solid #bbb; background: #f0f0f0; font-size: 59.8px; line-height: 74px; text-align: center; }
  .tabs { display: flex; align-items: flex-end; height: 69px; margin-top: 12px; padding-left: 4px; position: relative; }
  .tab { display: flex; align-items: center; gap: 4px; height: 65px; border: 1px solid #999; border-left-width: 0; background: linear-gradient(#fff 40%, #e2e2e2); font-size: 36.3px; padding: 0 15px 3px 9px; white-space: nowrap; }
  .tab:first-child { border-left-width: 1px; width: 221px; }
  .tab.current { height: 70px; margin-bottom: -1px; background: #fff; border-bottom: 0; width: 118px; padding-left: 14px; padding-bottom: 6px; z-index: 1; }
  .tab:last-child { width: 164px; padding-left: 10px; }
  .panel { height: 1726px; border: 1px solid #999; }
  .top { display: flex; padding: 27px 0 0 39px; height: 496px; }
  .group legend { font-size: 60.2px; font-weight: 700; line-height: 54px; height: 60px; white-space: nowrap; }
  .group.status { width: 717px; height: 469px; padding: 32px 0 0; }
  .group.status legend { margin-left: 33px; padding: 0 18px; font-size: 59.4px; }
  .row { display: grid; grid-template-columns: 304px 194px 138px; height: 108.5px; align-items: center; font-size: 52px; }
  .row span { text-align: right; white-space: nowrap; }
  .row b { font-weight: 400; text-align: center; }
  .led { width: 78px; height: 78px; border-radius: 50%; margin: 6px auto 0; padding: 6px; background: linear-gradient(135deg, #a0a0a0 15%, #f0f0f0 85%); }
  .led::before { content: ''; display: block; width: 66px; height: 66px; border-radius: 50%; background: linear-gradient(135deg, #d8ffd8 8%, #46fa46 38%, #00fc00 85%); }
  .env { width: 2022px; height: 469px; margin-left: 40px; }
  .env legend { margin-left: 32px; padding: 0 3px; }
  .points { display: flex; margin-top: 8px; }
  .point { width: 672px; height: 366px; padding: 33px 0 0 51px; border-right: 1px solid #999; }
  .point:nth-child(2) { padding-left: 41px; width: 671px; }
  .point:last-child { padding-left: 32px; border-right: 0; }
  .vals, .units { display: grid; grid-template-columns: 196px 196px 196px; text-align: center; }
  .vals { font-size: 48.3px; line-height: 60px; color: #0000a0; padding-left: 3px; }
  .dust { color: #00b400; margin-left: -15px; }
  .units { margin-top: 4px; font-size: 39px; font-weight: 700; line-height: 50px; }
  .units sup { font-size: 30px; vertical-align: 14px; line-height: 0; margin-right: 6px; }
  .frac { margin: 5px 0 0 89px; overflow: visible; }
  .pname { font-size: 43px; line-height: 60px; width: 588px; text-align: center; margin-top: 20px; }
  .actions { display: flex; flex-direction: column; gap: 30px; padding: 41px 0 0 84px; }
  .actions button { display: flex; align-items: center; background: #fafafa; padding-bottom: 2px; }
  .actions .camera { width: 540px; height: 118px; font-size: 44px; border: 2px solid; border-color: #eee #777 #666 #eee; padding-left: 30px; gap: 55px; }
  .actions .control { width: 542px; height: 172px; font-size: 36.4px; border: 4px solid; border-color: #f2f2f2 #aaa #777 #f2f2f2; padding-left: 30px; gap: 17px; }
  .diagram { overflow: hidden; }
  .cool { font-size: 32px; font-weight: 700; }
  .reading { font-size: 53px; font-weight: 700; }
  .deg { font-size: 36px; }
  .lcw { font-size: 32px; font-weight: 700; }

  .foot { display: flex; height: 39px; margin: 0 0 0 2px; width: 3780px; line-height: 37px; white-space: nowrap; }
  .credit { width: 3024px; background: #b0f624; text-align: right; padding-right: 134px; font-size: 26.6px; font-style: italic; }
  .project { flex: 1; background: #10105a; color: #fff; font-size: 34.7px; font-weight: 700; font-style: italic; display: flex; align-items: center; justify-content: space-between; padding: 0 6px 0 29px; }
  .statusbar { height: 33px; margin-right: -6px; display: flex; justify-content: flex-end; align-items: center; gap: 8px; color: #888; font-size: 17px; }
  .statusbar b { font-weight: 400; color: #000; width: 106px; height: 30px; line-height: 32px; margin-top: 4px; padding-left: 21px; background: #ececec; border: 1px solid #bbb; font-size: 16.5px; }

  .popup { position: absolute; left: 2926px; top: 619px; width: 1201px; height: 1306px; background: #fff; border: 1px solid #aaa; box-shadow: 0 4px 22px rgba(0, 0, 0, 0.45); display: flex; flex-direction: column; }
  .popup .titlebar { height: 44px; display: flex; align-items: center; padding: 0 25px 0 10px; color: #989898; font-size: 17.6px; }
  .popup .titlebar span { margin-left: 5px; font-family: "Open Sans", sans-serif; white-space: nowrap; }
  .inner { flex: 1; border: 1px solid #000; padding: 0; }
  h2 { margin: 0; height: 41px; line-height: 38px; padding-left: 0; background: #b0f624; color: #fff; font-size: 31.4px; }
  .ptabs { display: flex; align-items: flex-end; height: 38px; padding-left: 3px; font-size: 20px; position: relative; }
  .ptabs span { height: 33px; line-height: 29px; border: 1px solid #999; border-left: 0; background: linear-gradient(#fff 40%, #e4e4e4); width: 141px; padding-left: 4px; white-space: nowrap; }
  .ptabs .sel { height: 36px; width: 61px; margin-bottom: -1px; border-left: 1px solid #999; border-bottom: 0; background: #fff; padding-left: 6px; z-index: 1; }
  .pbody { margin: 0 4px 0 3px; height: 1176px; border: 1px solid #999; padding: 4px 0 0 23px; }
  .pgroup { width: 1144px; }
  .pgroup legend { margin-left: 17px; padding: 0 2px; font-size: 34px; font-weight: 700; line-height: 38px; height: 40px; }
  .pump { height: 306px; padding-top: 18px; }
  .heat { height: 205px; margin-top: 9px; padding-top: 7px; }
  .temp { height: 613px; margin-top: 11px; padding: 25px 0 0 18px; }
  .pgroup.temp legend { margin-left: -1px; }
  .prow { display: grid; grid-template-columns: 444px 59px 133px 44px 133px; height: 76px; align-items: center; font-size: 30.5px; }
  .heat .prow { height: 72px; }
  .prow label, .lrow label { text-align: right; white-space: nowrap; padding-bottom: 4px; }
  .prow .toggle:nth-child(2) { grid-column: 3; }
  .prow .toggle:nth-child(3) { grid-column: 5; }
  .prow.set { grid-template-columns: 444px 51px 150px 8px 67px 120px; }
  .prow.wide { grid-template-columns: 446px 49px 150px 12px 68px 120px; }
  .set .field { grid-column: 3; }
  .set em { grid-column: 5; padding-bottom: 2px; }
  .set button { grid-column: 6; }
  .field { width: 151px; height: 50px; line-height: 45px; border: 1.5px solid #1a80e8; text-align: center; }
  .field.bad { border: 3px solid #f2f; line-height: 41px; }
  .popup button { width: 121px; height: 49px; padding-bottom: 2px; background: #f0f0f0; border-right: 1px solid #999; border-bottom: 1px solid #999; font-size: 31.5px; }
  .toggle { display: flex; align-items: center; width: 133px; height: 51px; border-radius: 26px; background: #565656; color: #e4e4e4; font-size: 21.5px; }
  .toggle b { font-weight: 400; flex: 1; text-align: center; padding-right: 8px; }
  .toggle i { width: 49px; height: 49px; border-radius: 50%; background: linear-gradient(#fff, #e2e2e2); box-shadow: 0 0 2px #333; }
  .toggle.on { flex-direction: row-reverse; background: #1c9cff; }
  .toggle.on b { padding: 0 0 0 10px; color: #ecf6ff; }
  .loop { width: 1106px; height: 250px; border: 1px dashed #0080ff; }
  .two { margin-top: 26px; }
  .lname { display: block; width: 87px; height: 36px; line-height: 32px; padding-left: 4px; font-size: 26.3px; border-right: 1px dashed #0080ff; border-bottom: 1px dashed #0080ff; margin-bottom: 9px; }
  .two .lname { margin-bottom: 14px; }
  .lrow { display: grid; grid-template-columns: 420px 53px 150px 71px 150px 18px 120px; height: 78px; align-items: center; font-size: 30.3px; }
  .lrow > :nth-child(2) { grid-column: 3; text-align: center; }
  .lrow > :nth-child(3) { grid-column: 4; font-size: 26px; padding-bottom: 2px; }
  .lrow > :nth-child(4) { grid-column: 5; }
  .lrow > :nth-child(5) { grid-column: 7; }
  .lrow sup { font-size: 24px; vertical-align: 8px; line-height: 0; margin-left: 3px; }
  .two label { position: relative; left: 7px; }
  .two .lrow > :nth-child(2) { margin-left: -4px; }
  .two .lrow > :nth-child(3) { margin-left: -4px; }
  .lrow.sub { height: 24px; margin-top: -10px; font-size: 21px; line-height: 22px; }
  .lrow.sub > span { text-align: center; white-space: nowrap; margin-left: 0; font-size: 21px; }
</style>
